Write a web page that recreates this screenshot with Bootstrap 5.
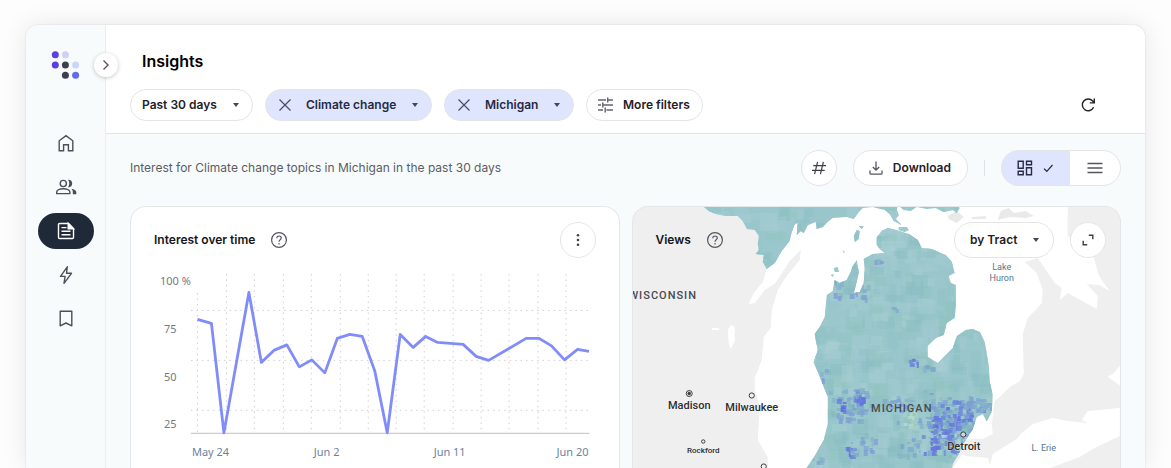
<!DOCTYPE html>
<html lang="en">
<head>
<meta charset="utf-8">
<meta name="viewport" content="width=device-width, initial-scale=1">
<title>Insights</title>
<link href="https://cdn.jsdelivr.net/npm/bootstrap@5.3.0/dist/css/bootstrap.min.css" rel="stylesheet">
<style>
  :root { --line: #e2e5e8; --ink: #1f2028; --tint: #e0e5fe; --wash: #f7fbfc; }
  body { font-family: Inter, "Liberation Sans", sans-serif; font-size: 12px; line-height: 16px; color: var(--ink); background: #fdfdfd; }
  svg { display: block; flex: none; }
  .icon-line { fill: none; stroke: currentColor; stroke-width: 1.4; }
  .icon-thin { stroke-width: 1.2; }
  .icon-help { overflow: visible; color: #55575e; stroke-width: 1.2; }
  .shell { padding: 25px 26px 0; }
  .app-window { border-radius: 12px 12px 0 0; background: #fff; box-shadow: 0 0 2px rgba(0,0,0,.14), 0 0 26px rgba(0,0,0,.09); }
  .side-rail { width: 80px; padding-top: 26px; border-right: 1px solid #eaeef0; background: var(--wash); border-top-left-radius: 12px; color: #4d4f58; }
  .side-links { margin-top: 46px; }
  .side-links a { width: 56px; height: 36px; color: inherit; }
  .side-links a.active { background: #1f2937; color: #fff; }
  .rail-toggle { top: 28px; right: -13px; width: 24px; height: 24px; background: #fff; color: #555; box-shadow: 0 1px 4px rgba(0,0,0,.22); }
  .top-area { padding: 24px 24px 12px; border-bottom: 1px solid var(--line); }
  .top-area h1 { font-size: 16px; line-height: 24px; margin: 0 0 16px 12px; font-weight: 600; color: #000; }
  .filters { gap: 12px; }
  .chip, .pill { border: 1px solid var(--line); background: #fff; font-size: 12px; line-height: 16px; font-weight: 600; color: var(--ink); border-radius: 18px; }
  .chip { height: 32px; }
  .chip-more { padding: 0 12px 0 8px; }
  .pill { height: 36px; padding: 0 16px 0 15px; gap: 10px; }
  .chip-on { background: var(--tint); color: #262a45; padding-left: 12px; }
  .chip-on button { color: #474b66; }
  .pick { width: auto; padding: 0 24px 0 14px; font-size: 12px; line-height: 16px; font-weight: 600; color: inherit; background-color: transparent; background-size: 6px 4px; background-position: right 13px center; border: 0; border-radius: 18px;
    --bs-form-select-bg-img: url("data:image/svg+xml,%3csvg xmlns='http://www.w3.org/2000/svg' viewBox='0 0 6 4'%3e%3cpath d='M0 0h6L3 4z' fill='%23444655'/%3e%3c/svg%3e");
    background-image: var(--bs-form-select-bg-img); }
  .pick-days { width: 121px; padding-left: 11px; }
  .pick-topic { width: 139px; }
  .pick-place { width: 102px; }
  .pick-tract { width: 100px; height: 36px; padding-left: 15px; border: 1px solid var(--line); background-color: #fff; background-position: right 14px center; }
  .work-area { background: var(--wash); padding: 16px 24px 0; }
  .summary { font-size: 12px; color: #5b5d63; }
  .round-btn { width: 36px; height: 36px; border: 1px solid var(--line); background: #fff; color: #3c3e46; }
  .rule-v { width: 1px; height: 16px; background: #dde2e5; }
  .view-switch label { height: 36px; border: 1px solid var(--line); background: #fff; color: #55565c; }
  .view-switch .grid-view { width: 68px; border-radius: 18px 0 0 18px; border-right: 0; }
  .view-switch .list-view { width: 52px; border-radius: 0 18px 18px 0; }
  .view-switch .btn-check:checked + label { background: var(--tint); color: #262a45; }
  .panels { margin-top: 20px; gap: 12px; }
  .panel { flex: 1 1 0; min-width: 0; border: 1px solid #e2e8ea; border-bottom: 0; border-radius: 16px 16px 0 0; background: #fff; overflow: hidden; }
  .panel h2 { font-size: 12px; line-height: 16px; font-weight: 600; margin: 0; color: #15161c; }
  .panel-head { padding: 15px 23px 0; }
  .chart { padding: 0 23px; }
  .chart text { font: 11px "Noto Sans", sans-serif; fill: #77797e; }
  .chart .day { fill: #6b839c; }
  .map-panel { display: grid; grid-template: minmax(0, 1fr) / minmax(0, 1fr); background: #efefef; }
  .map-panel > * { grid-area: 1 / 1; }
  .map-panel .panel-head { padding-right: 14px; align-self: start; }
  .map text { font-family: Roboto, sans-serif; fill: #2c2d30; text-anchor: middle; }
  .map .region { font-size: 11px; font-weight: 500; letter-spacing: 1px; fill: #484a4e; }
  .map .city { font-size: 11px; font-weight: 500; paint-order: stroke; stroke: #fff; stroke-width: 1px; stroke-opacity: .5; }
  .map .town { font-size: 8px; font-weight: 500; }
  .map .water { font-size: 9px; fill: #54768f; }
</style>
</head>
<body>
<div class="shell vh-100 overflow-hidden d-flex">
  <div class="app-window d-flex flex-fill">
    <aside class="side-rail position-relative d-flex flex-column align-items-center flex-shrink-0">
      <svg width="29" height="28" viewBox="0 0 29 28" role="img" aria-label="Home logo">
        <circle cx="4.300" cy="3.800" r="3.500" fill="#5b3fe4"/><circle cx="14.400" cy="3.800" r="3.500" fill="#cfcff8"/>
        <circle cx="4.300" cy="14" r="3.500" fill="#5b3fe4"/><circle cx="14.400" cy="14" r="3.500" fill="#3d3f4e"/><circle cx="24.600" cy="14" r="3.500" fill="#c9d6ff"/>
        <circle cx="14.400" cy="24.200" r="3.500" fill="#3d3f4e"/><circle cx="24.600" cy="24.200" r="3.500" fill="#6269ee"/>
      </svg>
      <button class="rail-toggle btn rounded-circle border-0 p-0 position-absolute d-flex align-items-center justify-content-center" type="button" aria-label="Expand menu">
        <svg class="icon-line" width="12" height="12" viewBox="0 0 12 12"><path d="M3.500 1.500 8 6 3.500 10.500"/></svg>
      </button>
      <nav class="side-links d-flex flex-column gap-2" aria-label="Main">
        <a href="#" class="rounded-pill d-flex align-items-center justify-content-center" aria-label="Home">
          <svg class="icon-line" width="20" height="20" viewBox="0 0 20 20"><path d="M3.200 17.800V7.800L10 2.600l6.800 5.200v10h-4.400v-6H7.600v6z"/></svg></a>
        <a href="#" class="rounded-pill d-flex align-items-center justify-content-center" aria-label="People">
          <svg class="icon-line" width="22" height="20" viewBox="0 0 22 20"><circle cx="8.300" cy="6.500" r="3.100"/><path d="M1.700 16.600v-1.500c0-2 3.300-3.300 6.600-3.300s6.600 1.300 6.600 3.300v1.500z"/><path d="M13 2.800c2.400-.4 4.200 1.400 4.200 3.700s-1.800 4.100-4.200 3.700c1.700-2.200 1.700-5.200 0-7.400zM16.300 11.700c3.200.5 5 1.800 5 3.600v2h-3.500v-2c0-1.500-.4-2.600-1.500-3.600z" fill="currentColor" stroke="none"/></svg></a>
        <a href="#" class="active rounded-pill d-flex align-items-center justify-content-center" aria-label="Insights" aria-current="page">
          <svg class="icon-line" width="20" height="20" viewBox="0 0 20 20"><path d="M12.500 2.500H3.500q-1 0-1 1v13q0 1 1 1h13q1 0 1-1V7.500z"/><path d="M12.200 2.500v5.300h5.300z" fill="currentColor"/><path d="M5.500 6.600h5M5.500 10.200h9M5.500 13.700h9"/></svg></a>
        <a href="#" class="rounded-pill d-flex align-items-center justify-content-center" aria-label="Activity">
          <svg class="icon-line" width="20" height="20" viewBox="0 0 20 20"><path d="M11.300 1.800 4.500 11.400h4.600l-1.100 6.900 7.500-10h-5z" stroke-linejoin="round"/></svg></a>
        <a href="#" class="rounded-pill d-flex align-items-center justify-content-center" aria-label="Saved">
          <svg class="icon-line" width="20" height="20" viewBox="0 0 20 20"><path d="M4.200 2.200h11.600v14.600L10 14l-5.800 2.800z" stroke-linejoin="round"/></svg></a>
      </nav>
    </aside>

    <main class="d-flex flex-column flex-fill">
      <header class="top-area">
        <h1>Insights</h1>
        <div class="d-flex align-items-center">
          <div class="filters d-flex align-items-center">
            <div class="chip d-flex"><select class="pick pick-days form-select" aria-label="Period"><option>Past 30 days</option></select></div>
            <div class="chip chip-on d-flex align-items-center">
              <button class="btn p-0 border-0" type="button" aria-label="Remove topic"><svg class="icon-line icon-thin" width="14" height="14" viewBox="0 0 14 14"><path d="m1.500 1.500 11 11M12.500 1.500l-11 11"/></svg></button>
              <select class="pick pick-topic form-select" aria-label="Topic"><option>Climate change</option></select>
            </div>
            <div class="chip chip-on d-flex align-items-center">
              <button class="btn p-0 border-0" type="button" aria-label="Remove place"><svg class="icon-line icon-thin" width="14" height="14" viewBox="0 0 14 14"><path d="m1.500 1.500 11 11M12.500 1.500l-11 11"/></svg></button>
              <select class="pick pick-place form-select" aria-label="Place"><option>Michigan</option></select>
            </div>
            <button type="button" class="chip chip-more d-flex align-items-center gap-2 text-nowrap">
              <svg width="20" height="16" viewBox="0 0 20 16" fill="none" stroke="#63636b" stroke-width="1.400"><path d="M3 3h8M14.500 3H18M12.700.5v5M12.700 3H16M3 8h3M8.500 8H18M7.800 5.500v5M3 13h5M11.500 13H18M10.200 10.500v5"/></svg>
              More filters</button>
          </div>
          <button type="button" class="btn p-0 border-0 ms-auto me-4" aria-label="Refresh">
            <svg class="icon-line" width="18" height="20" viewBox="1 0 18 20"><path d="M15.600 12.300A5.900 5.900 0 1 1 14.700 6l1.600 1.800M16.300 3.400v4.500h-4.500"/></svg></button>
        </div>
      </header>

      <section class="work-area flex-fill d-flex flex-column">
        <div class="d-flex align-items-center gap-3">
          <span class="summary me-auto">Interest for Climate change topics in Michigan in the past 30 days</span>
          <button type="button" class="round-btn rounded-circle p-0 d-flex align-items-center justify-content-center" aria-label="Tags">
            <svg class="icon-line icon-thin" width="16" height="16" viewBox="0 0 16 16"><path d="M6.600 1.800 3.600 14.200M12.400 1.800 9.400 14.200M2.300 5.600H15M1 10.400h12.700"/></svg></button>
          <button type="button" class="pill d-flex align-items-center">
            <svg width="14" height="14" viewBox="0 0 14 14" fill="none" stroke="#54565e" stroke-width="1.300"><path d="M7 .5v8.700M3.800 6 7 9.200 10.200 6M1 9.500v2.700q0 1 1 1h10q1 0 1-1V9.500"/></svg>
            Download</button>
          <span class="rule-v"></span>
          <div class="view-switch d-flex" role="group" aria-label="View">
            <input class="btn-check" type="radio" name="view" id="grid" checked>
            <label class="grid-view d-flex align-items-center justify-content-center gap-2" for="grid" aria-label="Grid view">
              <svg class="icon-line" width="16" height="16" viewBox="0 0 16 16"><path d="M1.200 1.200h5v7h-5zM9.500 1.200h5v3.500h-5zM1.200 11.300h5v3.500h-5zM9.500 7.800h5v7h-5z"/></svg>
              <svg class="icon-line icon-thin" width="14" height="14" viewBox="0 0 14 14"><path d="m3 7.600 2.800 2.700L11.500 4"/></svg></label>
            <input class="btn-check" type="radio" name="view" id="list">
            <label class="list-view d-flex align-items-center justify-content-center" for="list" aria-label="List view">
              <svg class="icon-line" width="16" height="16" viewBox="0 0 16 16"><path d="M.5 3.500h15M.5 8h15M.5 12.500h15"/></svg></label>
          </div>
        </div>

        <div class="panels d-flex flex-fill">
          <article class="panel">
            <div class="panel-head d-flex align-items-center">
              <h2>Interest over time</h2>
              <svg class="icon-line icon-help ms-3" width="16" height="16" viewBox="0 0 16 16"><circle cx="8" cy="8" r="7.400"/><path d="M5.800 6.200c0-3 4.500-2.800 4.500-.1C10.300 7.800 8 7.800 8 9.700M8 11.100v1.400"/></svg>
              <button type="button" class="round-btn rounded-circle p-0 ms-auto d-flex align-items-center justify-content-center" aria-label="More options">
                <svg width="4" height="14" viewBox="0 0 4 14" fill="#41434b"><circle cx="2" cy="2.200" r="1.300"/><circle cx="2" cy="7" r="1.300"/><circle cx="2" cy="11.800" r="1.300"/></svg></button>
            </div>
            <div class="chart">
              <svg class="w-100" viewBox="154 258 442 206" role="img" aria-label="Interest over time">
                <g stroke="#cfd0d4" stroke-dasharray="1.500 4" id="grid-lines"></g>
                <path d="M191 433.500H590" stroke="#bfc0c4"/>
                <polyline fill="none" stroke="#808cfa" stroke-width="2.800" stroke-linejoin="round" points="197.500,319.500 211.500,323.500 224,433 249,292.500 261.500,362.500 274,350.500 287,345 299.500,367 312,360 325,373 337.500,338.500 350,334.500 362.500,336.500 375,371 387.500,433 400.500,334.500 413.500,347.500 426,336.500 438,342.500 463.500,344.500 476.500,356.500 489,360.500 526.500,338.500 539.500,338.500 552,346 565,360 578,349.500 589.500,351.500"/>
                <text x="160" y="285">100 %</text><text x="164" y="333">75</text><text x="164" y="381">50</text><text x="164" y="428">25</text>
                <text class="day" x="192" y="456">May 24</text><text class="day" x="314" y="456">Jun 2</text><text class="day" x="434" y="456">Jun 11</text><text class="day" x="557" y="456">Jun 20</text>
              </svg>
            </div>
          </article>

          <article class="panel map-panel">
            <svg class="map w-100 h-100" viewBox="633 207 488 261" preserveAspectRatio="xMidYMin slice" role="img" aria-label="Views map of Michigan">
              <defs>
                <clipPath id="land">
                  <path id="up" d="M704 207l5 4 7 3 10 2 12 0 5 5 4 8 8 1 4 6-1 8 1 6-3 4 8 1-1 7 4 7 8-6 7-12 8-10 2-9 3-8 3-1-1 12 4-4 3 2 4-8 8-3 1 7 6-2 5-5 5-4 14-1 7 2 5-7 4-4 10-1 12 3 5 4 4 7 8 4-6-6 3-4-2-5 1-5 6 5 7 1 6-4 10 2 9-1 8 4 9-2 4 3 3-5-6-7z"/>
                  <path id="lp" d="M815 334l5-7 5-10 2-22 6-4 2-11 5 3 7-3 4-8 2-6 4-6 2 12-3 14-2 7 6-1 4-9 1-14-1-10 9-5 12-1-5-4-3-4v-8l5-6 6-3 8 2 13 4 9 6 4 8 10 1 14 6 6 7 3 11-6 3 2 7 5 2v20l-1 13-8 5-3 12-8 3-8 8 0 11 10 6 8-8 7-7 4-12 9-6 7-1 7 3 5 10 4 24 1 16 3 12-1 18-5 9-4-7-6 3-4 12-11 17-2 6-7 12-2 10H803L816 454 824 440 828 424V397l-8-20-6-15 4-12-2-10z"/>
                  <path id="isles" d="M857 230l3 1-1 8-4 3-1-6zM859 226l5 0-2 3zM843 250l2 2-1 1zM834 268l4-1 1 5-4 0zM831 275l3-1-1 3zM899 227l8 0 2 3-4 2-6-2z"/>
                </clipPath>
              </defs>
              <path fill="#fff" d="M704 200H1121V207H1075L1068 215V236L1086 248 1094 256 1097 268 1101 279 1110 291 1099 285 1087 284 1098 296 1097 309 1068 293 1060 300 1062 288 1055 283 1047 271 1038 258 1025 262 1037 273 1043 290 1042 303 1028 318 1023 334 1024 374 1020 381 1010 387 1000 397 995 401 992 424 993 434 983 439 970 439 800 470H768V457L758 440 760 407 755 390V378L762 360 764 337 771 328 772 310 778 290 787 276 800 260 801 250 790 261 775 284 765 290 755 303 749 304 754 293 763 282 768 266 764 254 770 235 760 220 740 208z"/>
              <path fill="#fff" d="M728 330l3-5 4 2 0 14-4 8-2-5zM712 328l7 0v2h-7zM1108 377l6-4 7-8v21zM953 468l9-13 26 2 2 8 3-11 24-15 5-6 11-9 20-6 15 3 20 2-6-3 6-9 32-3v28l-27 13-13 8-30 11z"/>
              <path fill="#efefef" d="M1068 206h53v60l-22 10-5-20-8-8-18-12z"/>
              <path fill="#e9e9e9" d="M948 216l9-5 7 6-7 6-8-4zM1001 211l8-3 5 5 12-2 8 5-8 2-16-1-12 3zM972 217l14-1v3h-14z"/>
              <path fill="#efefef" d="M962 450l8-10 22-1 1 15-5 4-22-2z"/>
              <g clip-path="url(#land)"><path fill="#98c6ca" d="M633 200h488v270H633z"/><g id="tracts"></g></g>
              <g fill="#efefef" stroke="#3d3e41">
                <circle cx="689.500" cy="393.500" r="3"/><circle cx="689.500" cy="393.500" r="1.300" fill="#333"/><circle cx="752" cy="395.500" r="2.600"/><circle cx="703.500" cy="441.500" r="1.700"/><circle cx="764" cy="466.500" r="2.600"/><circle cx="963.500" cy="434.500" r="2.600" fill="#c9d8de"/>
              </g>
              <text class="region" x="663" y="299">WISCONSIN</text>
              <text class="region" x="902" y="412">MICHIGAN</text>
              <text class="city" x="689.500" y="409">Madison</text><text class="city" x="752" y="411">Milwaukee</text><text class="city" x="964" y="450">Detroit</text>
              <text class="town" x="703.500" y="453">Rockford</text>
              <text class="water" x="1002" y="270">Lake</text><text class="water" x="1002" y="281">Huron</text><text class="water" x="1044" y="451">L. Erie</text>
            </svg>
            <div class="panel-head d-flex align-items-center">
              <h2>Views</h2>
              <svg class="icon-line icon-help ms-3" width="16" height="16" viewBox="0 0 16 16"><circle cx="8" cy="8" r="7.400"/><path d="M5.800 6.200c0-3 4.500-2.800 4.500-.1C10.300 7.800 8 7.800 8 9.700M8 11.100v1.400"/></svg>
              <select class="pick pick-tract form-select ms-auto me-3" aria-label="Map unit"><option>by Tract</option></select>
              <button type="button" class="round-btn rounded-circle p-0 d-flex align-items-center justify-content-center" aria-label="Full screen">
                <svg class="icon-line" width="12" height="12" viewBox="0 0 12 12"><path d="M6.800 1.200h4v4M1.200 6.800v4h4"/></svg></button>
            </div>
          </article>
        </div>
      </section>
    </main>
  </div>
</div>
<script src="https://cdn.jsdelivr.net/npm/bootstrap@5.3.0/dist/js/bootstrap.bundle.min.js"></script>
<script>
  // Dotted grid behind the line
  const columns = [197.5, 226.5, 254.5, 283.5, 311.5, 340.5, 368.5, 396.5, 424.5, 453.5, 481.5, 509.5, 538.5, 566.5];
  document.getElementById('grid-lines').innerHTML =
    columns.map((x, i) => `<path d="M${x} ${i ? 274 : 293}V433"/>`).join('') +
    [310.5, 360.5, 410.5].map(y => `<path d="M191 ${y}H590"/>`).join('');

  // Census tracts: teal mosaic, turning blue around the cities
  let seed = 11;
  const rnd = () => (seed = (seed * 16807) % 2147483647) / 2147483647;
  const pick = list => list[Math.floor(rnd() * list.length)];
  const tiles = [];
  const tile = (x, y, w, h, fill, o) =>
    tiles.push(`<rect x="${Math.round(x)}" y="${Math.round(y)}" width="${Math.round(w)}" height="${Math.round(h)}" fill="${fill}" opacity="${o}"/>`);
  for (let i = 0; i < 1000; i++)
    tile(700 + rnd() * 295, 205 + rnd() * 263, 6 + rnd() * 12, 6 + rnd() * 12, pick(['#86bcc0', '#a9cfd5', '#8fc0c6', '#9ec8d0', '#90c3bf', '#a4cbd2']), .4);
  // x, y, spread x, spread y, count, colours
  const soft = ['#7fa6cf', '#84b0cc', '#86b8bd', '#7c9bd6'], strong = ['#6678dc', '#6b86d8', '#7fa3d0', '#5f6ee2'];
  [[850, 407, 24, 22, 60, soft], [859, 397, 7, 14, 26, strong], [842, 404, 8, 8, 8, strong],
   [895, 404, 18, 9, 22, soft], [905, 415, 14, 14, 14, ['#b7dccb', '#7fa6cf', '#a5d1c4']],
   [950, 423, 46, 36, 150, soft], [940, 434, 22, 26, 75, strong], [963, 412, 26, 18, 45, strong],
   [975, 404, 22, 8, 26, soft], [956, 440, 22, 20, 22, ['#b7dccb', '#a5d1c4', '#6b86d8']],
   [850, 447, 5, 12, 9, strong], [862, 442, 16, 12, 14, soft], [912, 359, 8, 6, 6, strong],
   [924, 366, 12, 3, 5, soft], [907, 450, 12, 10, 9, soft], [838, 286, 7, 12, 10, soft],
   [858, 291, 12, 8, 10, soft], [837, 270, 5, 5, 5, soft], [875, 261, 6, 3, 4, soft],
   [894, 309, 3, 4, 3, soft], [822, 373, 5, 6, 4, soft], [816, 457, 8, 7, 5, soft]
  ].forEach(([cx, cy, sx, sy, n, colours]) => {
    for (let i = 0; i < n; i++)
      tile(cx + (rnd() + rnd() - 1) * sx, cy + (rnd() + rnd() - 1) * sy, 2 + rnd() * 4, 2 + rnd() * 4, pick(colours), .75);
  });
  document.getElementById('tracts').innerHTML = tiles.join('');
</script>
</body>
</html>
